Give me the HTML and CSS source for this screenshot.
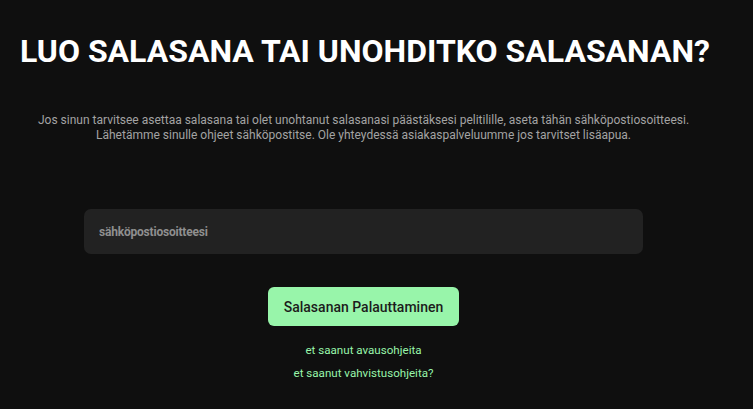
FILE: index.html
```html
<!DOCTYPE html>
<html>
	<head>
		<title>Luo salasana</title>
		<meta charset="UTF-8">
		<link rel="stylesheet" href="styles.css">
	</head>
	<body>
		<div class="wrap">
			<h1 class="title">LUO SALASANA TAI UNOHDITKO SALASANAN?</h1>
			<p class="info">Jos sinun tarvitsee asettaa salasana tai olet unohtanut salasanasi päästäksesi pelitilille, aseta tähän sähköpostiosoitteesi.<br>
			Lähetämme sinulle ohjeet sähköpostitse. Ole yhteydessä asiakaspalveluumme jos tarvitset lisäapua.</p>

			<form class="reset" onsubmit="return false;">
				<input class="email" type="text" placeholder="sähköpostiosoitteesi">
				<button class="send" type="submit">Salasanan Palauttaminen</button>
			</form>

			<div class="links">
				<a href="#">et saanut avausohjeita</a>
				<a href="#">et saanut vahvistusohjeita?</a>
			</div>
		</div>
	</body>
</html>
```

FILE: styles.css
```css
*{
	margin:0;
	padding:0;
	box-sizing:border-box;
}

html,body{
	height:100%;
}

body{
	background-color:#0f0f0f;
	font-family:Roboto, "Noto Sans", sans-serif;
	overflow:hidden;
}

.wrap{
	margin:0 46px 0 20px;
	padding-top:31px;
}

.title{
	color:#fff;
	font-size:32px;
	font-weight:700;
	line-height:40px;
	white-space:nowrap;
}

.info{
	margin-top:42px;
	color:#a3a3a3;
	font-size:12px;
	line-height:15px;
	text-align:center;
}

.reset{
	margin-top:66px;
	display:flex;
	flex-direction:column;
	align-items:center;
}

.email{
	width:559px;
	height:45px;
	padding:0 15px;
	border:none;
	border-radius:7px;
	background-color:#222;
	color:#ddd;
	font-family:Roboto, sans-serif;
	font-size:12px;
	font-weight:700;
	letter-spacing:-0.2px;
	outline:none;
}

.email::placeholder{
	color:#8f8f8f;
}

.send{
	margin-top:33px;
	width:191px;
	height:39px;
	border:none;
	border-radius:6px;
	background-color:#98f5aa;
	color:#1c1c1c;
	font-family:Roboto, sans-serif;
	font-size:14px;
	font-weight:500;
}

.links{
	margin-top:17px;
	display:flex;
	flex-direction:column;
	align-items:center;
	gap:8px;
}

.links a{
	color:#98f5aa;
	font-size:11.6px;
	line-height:15px;
	text-decoration:none;
}
```
